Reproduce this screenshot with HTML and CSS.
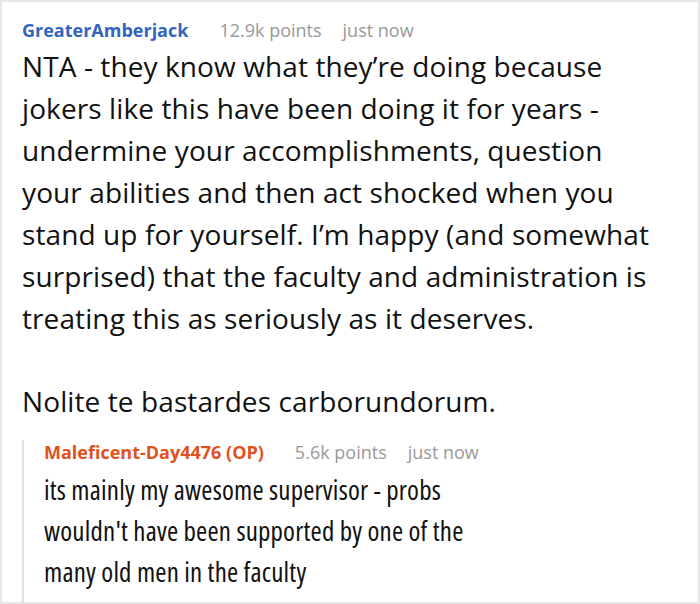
FILE: index.html
```html
<!DOCTYPE html>
<html>
<head>
<meta charset="utf-8">
<link rel="stylesheet" href="styles.css">
</head>
<body>
<div class="card">
  <div class="comment">
    <div class="meta">
      <span class="user">GreaterAmberjack</span>
      <span class="points">12.9k points</span>
      <span class="time">just now</span>
    </div>
    <div class="body">
      <p>NTA - they know what they’re doing because jokers like this have been doing it for years - undermine your accomplishments, question your abilities and then act shocked when you stand up for yourself. I’m happy (and somewhat surprised) that the faculty and administration is treating this as seriously as it deserves.</p>
      <p>Nolite te bastardes carborundorum.</p>
    </div>
  </div>
  <div class="reply">
    <div class="meta">
      <span class="user op">Maleficent-Day4476 (OP)</span>
      <span class="points">5.6k points</span>
      <span class="time">just now</span>
    </div>
    <div class="body narrow">
      <p>its mainly my awesome supervisor - probs wouldn't have been supported by one of the many old men in the faculty</p>
    </div>
  </div>
</div>
</body>
</html>
```
FILE: styles.css
```css
html, body {
  margin: 0;
  padding: 0;
  background: #fff;
}
.card {
  width: 700px;
  height: 604px;
  box-sizing: border-box;
  border: 2px solid #e6e6e6;
  overflow: hidden;
  padding: 16px 44px 0 20px;
  font-family: "Open Sans", "Noto Sans", sans-serif;
}
.meta {
  display: flex;
  align-items: baseline;
  font-size: 18px;
  line-height: 24px;
  color: #999;
  white-space: nowrap;
}
.user {
  font-weight: 700;
  color: #3266bd;
  margin-right: 31px;
}
.user.op {
  color: #df5220;
}
.points {
  margin-right: 21px;
}
.body {
  margin-top: 3px;
  font-size: 28px;
  line-height: 42px;
  letter-spacing: 0.1px;
  color: #111;
}
.body p {
  margin: 0 0 41px 0;
}
.body p:last-child {
  margin-bottom: 0;
}
.reply {
  margin-top: 29px;
  border-left: 2px solid #e3e3e3;
  padding-left: 20px;
  height: 200px;
}
.reply .meta {
  margin-top: -11px;
}
.body.narrow {
  margin-top: 5px;
  width: 470px;
  font-size: 27px;
  line-height: 41px;
  letter-spacing: 0.2px;
  font-stretch: 85%;
}
```
